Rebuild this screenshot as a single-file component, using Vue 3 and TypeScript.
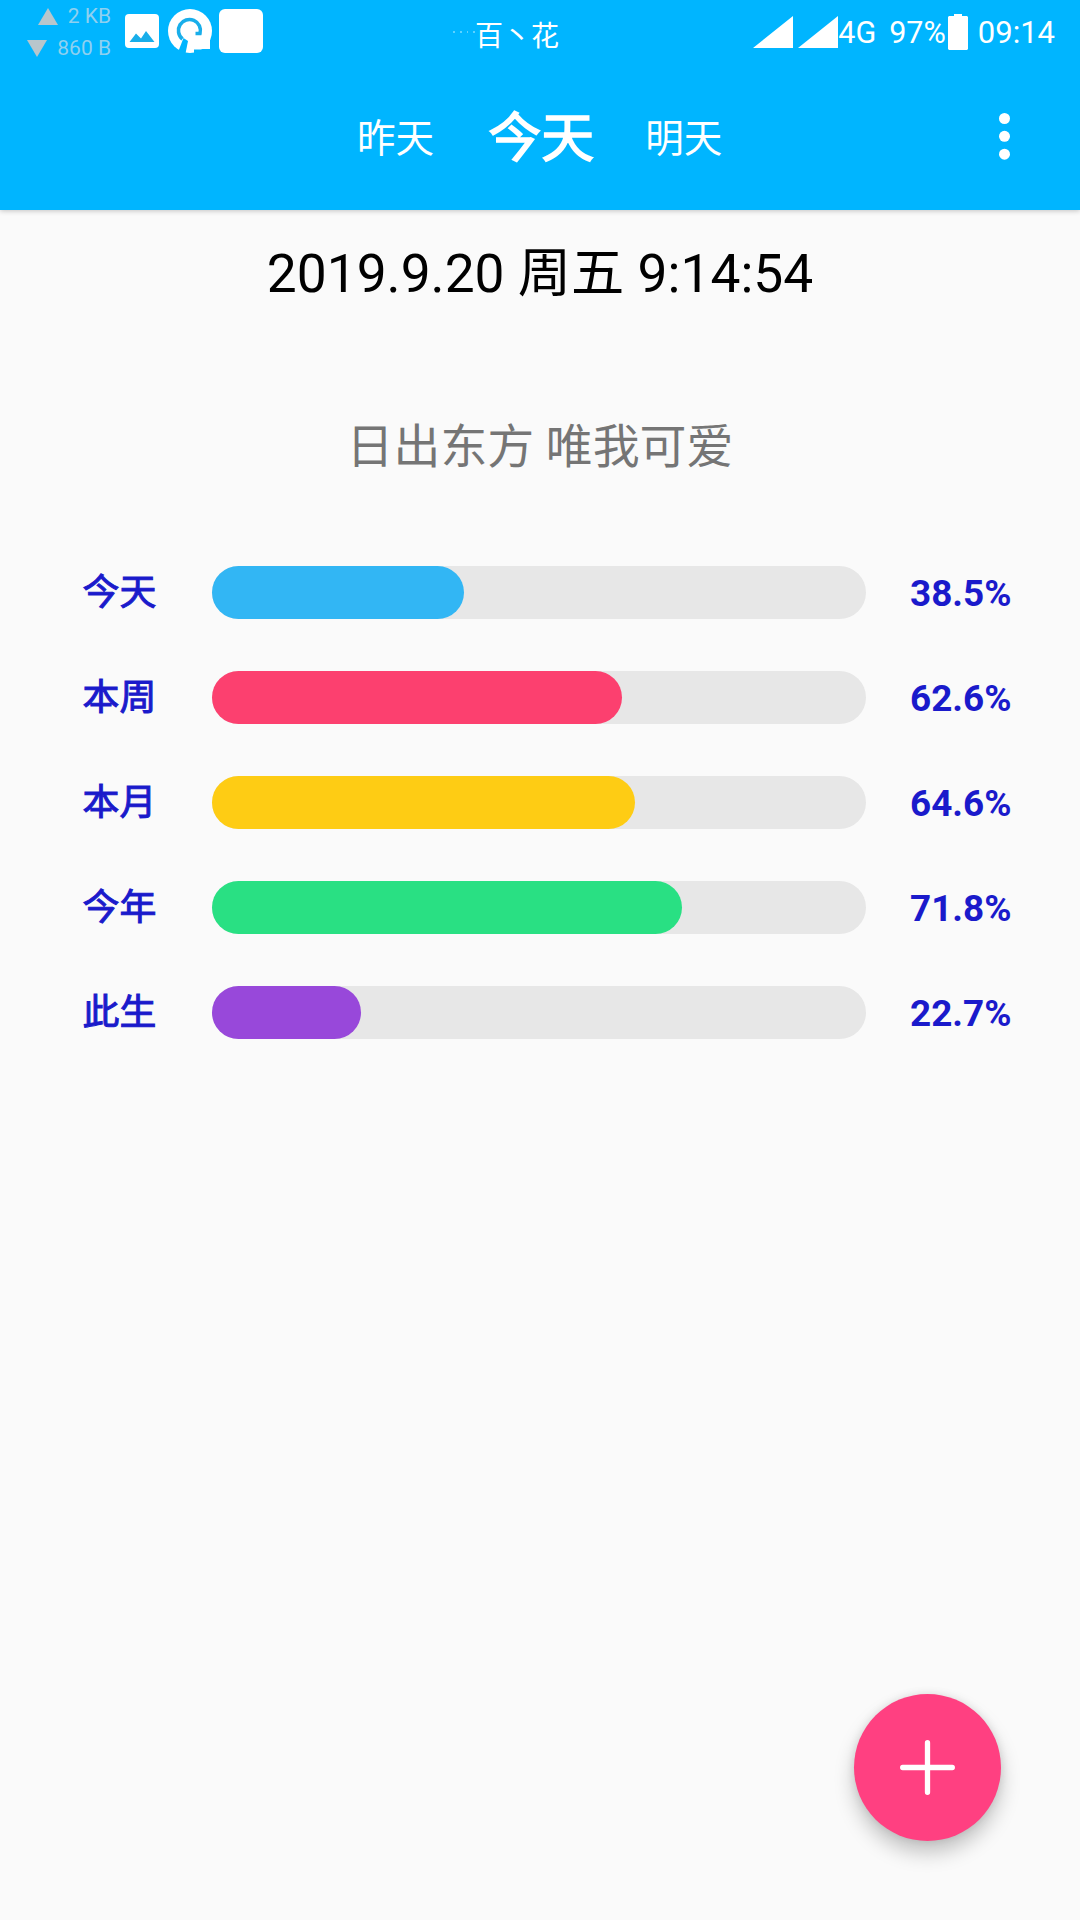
<script setup lang="ts">
interface ProgressRow {
  label: string
  percent: number
  color: string
}

const tabs = { previous: '昨天', current: '今天', next: '明天' }

const rows: ProgressRow[] = [
  { label: '今天', percent: 38.5, color: '#32b6f4' },
  { label: '本周', percent: 62.6, color: '#fc406f' },
  { label: '本月', percent: 64.6, color: '#fecc14' },
  { label: '今年', percent: 71.8, color: '#29e083' },
  { label: '此生', percent: 22.7, color: '#9848da' },
]
</script>

<template>
  <div class="screen">
    <header class="header">
      <div class="status">
        <div class="traffic">
          <div class="rate">
            <svg width="20" height="17" viewBox="0 0 20 17"><path d="M10 0 20 17H0z" fill="#b8c6cc" /></svg>
            <span>2 KB</span>
          </div>
          <div class="rate">
            <svg width="20" height="17" viewBox="0 0 20 17"><path d="M0 0H20L10 17z" fill="#b8c6cc" /></svg>
            <span>860 B</span>
          </div>
        </div>
        <svg class="picture" width="34" height="34" viewBox="0 0 34 34">
          <rect width="34" height="34" rx="4" fill="#fff" />
          <path d="M4.500 28 11 19.500 16 24.500 21 17 29.500 28z" fill="#18aeea" />
        </svg>
        <svg class="disc" width="44" height="44" viewBox="0 0 44 44">
          <circle cx="22" cy="22" r="22" fill="#fff" />
          <path d="M26 40H42V22H26z" fill="#fff" />
          <path d="M14.500 30A11 11 0 1 1 32 24.500H27.500" fill="none" stroke="#18aeea" stroke-width="3.600" />
          <path d="M15.500 29 20 32 17.500 44.500H9.500z" fill="#00b5ff" />
          <path d="M26 40.500H43V44H26z" fill="#00b5ff" />
        </svg>
        <span class="app-square"></span>
        <span class="faint-dots"><i></i><i></i><i></i><i></i></span>
        <span class="ticker">百丶花</span>
        <div class="system">
          <svg class="signal" width="85" height="32" viewBox="0 0 85 32"><path d="M40 0V32H0zM85 0V32H45z" fill="#fff" /></svg>
          <span class="network">4G</span>
          <span class="battery-level">97%</span>
          <svg class="battery" width="20" height="36" viewBox="0 0 20 36"><path d="M6 0H14V2H19L20 3V35L19 36H1L0 35V3L1 2H6z" fill="#fff" /></svg>
          <span class="clock">09:14</span>
        </div>
      </div>
      <nav class="tabs">
        <span class="tab">{{ tabs.previous }}</span>
        <span class="tab active">{{ tabs.current }}</span>
        <span class="tab">{{ tabs.next }}</span>
        <svg class="menu" width="12" height="48" viewBox="0 0 12 48" fill="#fff">
          <circle cx="5.500" cy="6.500" r="5.500" />
          <circle cx="5.500" cy="24.300" r="5.500" />
          <circle cx="5.500" cy="42.200" r="5.500" />
        </svg>
      </nav>
    </header>

    <main>
      <div class="date">2019.9.20 周五 9:14:54</div>
      <div class="motto">日出东方 唯我可爱</div>
      <div class="rows">
        <div v-for="row in rows" :key="row.label" class="row">
          <span class="label">{{ row.label }}</span>
          <div class="track">
            <div class="fill" :style="{ width: row.percent + '%', background: row.color }"></div>
          </div>
          <span class="value">{{ row.percent.toFixed(1) }}%</span>
        </div>
      </div>
    </main>

    <button class="fab" aria-label="add">
      <svg width="55" height="55" viewBox="0 0 55 55"><path d="M27.500 2.700V52.300M2.700 27.500H52.300" stroke="#fff" stroke-width="5.300" stroke-linecap="round" /></svg>
    </button>
  </div>
</template>

<style>
body {
  margin: 0;
  background: #fafafa;
}
</style>

<style scoped>
.screen {
  position: relative;
  width: 1080px;
  height: 1920px;
  overflow: hidden;
  background: #fafafa;
  font-family: Roboto, "Noto Sans CJK SC", sans-serif;
}
svg {
  display: block;
  flex: none;
}
.header {
  height: 210px;
  background: #00b5ff;
  box-shadow: 0 1px 5px rgba(0, 0, 0, 0.22);
}
.status {
  display: flex;
  align-items: flex-start;
  height: 62px;
  color: #fff;
  white-space: nowrap;
}
.traffic {
  width: 111px;
  padding-top: 8px;
  font-size: 21px;
  line-height: 17px;
  color: #8fd0ef;
}
.rate {
  display: flex;
  justify-content: flex-end;
  gap: 10px;
  height: 17px;
  margin-bottom: 15px;
}
.picture {
  margin: 14px 0 0 14px;
}
.disc {
  margin: 9px 0 0 9px;
}
.app-square {
  width: 44px;
  height: 44px;
  margin: 9px 0 0 7px;
  border-radius: 6px;
  background: #fff;
}
.faint-dots {
  display: flex;
  gap: 5px;
  width: 22px;
  margin: 31px 0 0 190px;
}
.faint-dots i {
  width: 2px;
  height: 2px;
  background: #5ed2ff;
}
.ticker {
  margin-top: 17px;
  font-size: 28px;
  line-height: 40px;
}
.system {
  display: flex;
  align-items: flex-start;
  margin-left: auto;
  padding-right: 25px;
  font-size: 30.500px;
  line-height: 36px;
}
.system span {
  margin-top: 15px;
}
.signal {
  margin-top: 16px;
}
.system .battery-level {
  margin-left: 13px;
}
.battery {
  margin: 14px 10px 0 2px;
}
.system .clock {
  font-size: 31px;
}
.tabs {
  display: flex;
  align-items: flex-start;
  padding-left: 357px;
  color: #fff;
}
.tab {
  margin-top: 49px;
  font-size: 38.600px;
  line-height: 56px;
}
.tab.active {
  margin: 37px 51px 0 54px;
  font-size: 53px;
  line-height: 80px;
  -webkit-text-stroke: 1.600px #fff;
}
.menu {
  margin: 50px 69px 0 auto;
}
.date {
  margin-top: 29px;
  text-align: center;
  font-size: 53.300px;
  line-height: 70px;
  color: #000;
}
.motto {
  margin-top: 105px;
  text-align: center;
  font-size: 46.900px;
  line-height: 66px;
  color: #757575;
}
.rows {
  display: flex;
  flex-direction: column;
  gap: 52px;
  margin-top: 86px;
  padding-left: 82.500px;
}
.row {
  display: flex;
  align-items: center;
  height: 53px;
  font-size: 36.900px;
  color: #1a1acb;
}
.label {
  width: 129.500px;
  line-height: 52px;
  -webkit-text-stroke: 1px #1a1acb;
}
.track {
  width: 654px;
  height: 53px;
  border-radius: 27px;
  background: #e7e7e7;
}
.fill {
  height: 53px;
  padding-right: 0.600px;
  border-radius: 27px;
}
.value {
  margin-left: 44px;
  padding-top: 2px;
  font-weight: 700;
}
.fab {
  position: absolute;
  right: 79px;
  bottom: 79px;
  display: flex;
  align-items: center;
  justify-content: center;
  width: 147px;
  height: 147px;
  padding: 0;
  border: 0;
  border-radius: 50%;
  background: #ff4081;
  box-shadow: 0 12px 20px rgba(0, 0, 0, 0.22), 0 0 8px rgba(0, 0, 0, 0.1);
}
</style>
